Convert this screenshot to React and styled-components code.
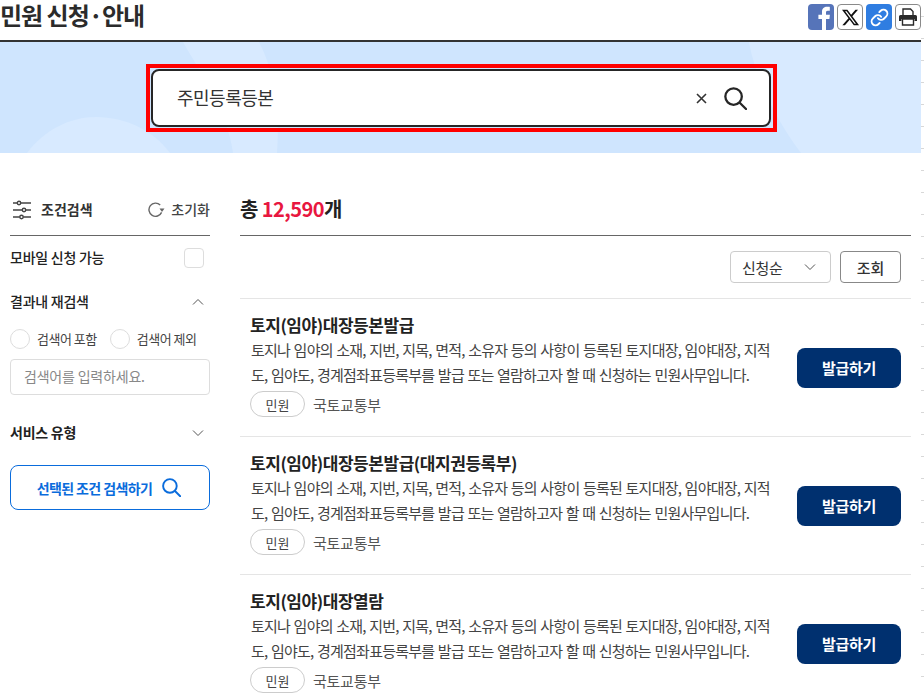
import React from "react";
import styled, { createGlobalStyle } from "styled-components";
import { FaXTwitter } from "react-icons/fa6";
import { Link as LinkIcon } from "lucide-react";

const Global = createGlobalStyle`
  html, body { margin: 0; padding: 0; background: #fff; overflow: hidden; }
  body { font-family: "Noto Sans CJK KR", "Noto Sans", sans-serif; color: #222; }
  * { box-sizing: border-box; }
`;

const Page = styled.div`
  display: flex;
  width: 924px;
  height: 698px;
  overflow: hidden;
`;
const Main = styled.div`
  width: 921px;
  flex: none;
`;
const TickStrip = styled.div`
  width: 3px;
  height: 682px;
  flex: none;
  background: repeating-linear-gradient(to bottom, transparent 0, transparent 16px, #d8d8d8 16px, #d8d8d8 17px, transparent 17px, transparent 22px);
`;
const Header = styled.header`
  height: 42px;
  display: flex;
  justify-content: space-between;
  border-bottom: 2px solid #333;
`;
const Title = styled.h1`
  margin: 0;
  font-size: 24px;
  font-weight: 700;
  line-height: 30px;
  color: #2b2b2b;
  letter-spacing: -1px;
`;
const ShareRow = styled.div`
  display: flex;
  gap: 3px;
  padding-top: 4px;
`;
const ShareButton = styled.button`
  width: 26px;
  height: 26px;
  padding: 0;
  display: flex;
  align-items: center;
  justify-content: center;
  overflow: hidden;
  border-radius: 4px;
  color: ${(p) => p.$color || "#222"};
  background: ${(p) => p.$bg || "#fff"};
  border: ${(p) => (p.$outlined ? "1px solid #8a8a8a" : "none")};
`;
const Banner = styled.section`
  position: relative;
  height: 111px;
  background: #cfe5fe;
  overflow: hidden;
`;
const BannerArt = styled.svg`
  position: absolute;
  left: 0;
  top: 0;
`;
const RedFrame = styled.div`
  position: absolute;
  left: 146px;
  top: 22px;
  width: 631px;
  height: 68px;
  border: 4px solid #ff0000;
  padding: 1px;
`;
const SearchBox = styled.div`
  height: 58px;
  width: 620px;
  border: 2px solid #262626;
  border-radius: 8px;
  background: #fff;
  display: flex;
  align-items: center;
  padding: 0 22px 0 24px;
`;
const SearchText = styled.span`
  flex: 1;
  padding-bottom: 2px;
  font-size: 18px;
  letter-spacing: -0.5px;
  color: #333;
`;
const ClearMark = styled.svg`
  margin-right: 17px;
`;
const Content = styled.div`
  display: flex;
  gap: 30px;
  padding: 44px 10px 0;
`;
const Sidebar = styled.aside`
  width: 200px;
  flex: none;
`;
const SideHead = styled.div`
  height: 39px;
  padding-bottom: 12px;
  padding-left: 3px;
  display: flex;
  align-items: center;
  border-bottom: 1px solid #666;
`;
const SideTitle = styled.strong`
  flex: 1;
  margin-left: 10px;
  padding-bottom: 2px;
  font-size: 14px;
  font-weight: 700;
  color: #333;
`;
const ResetLabel = styled.span`
  margin-left: 6px;
  padding-bottom: 2px;
  font-size: 14px;
  font-weight: 500;
  color: #444;
`;
const FilterRow = styled.div`
  height: 44px;
  display: flex;
  align-items: center;
  justify-content: space-between;
  padding-right: ${(p) => p.$pad || 6}px;
  margin-top: ${(p) => p.$top || 0}px;
`;
const FilterLabel = styled.span`
  padding-bottom: 2px;
  font-size: 14px;
  letter-spacing: -0.25px;
  font-weight: ${(p) => p.$weight || 500};
  color: #222;
`;
const CheckBox = styled.span`
  width: 20px;
  height: 20px;
  border: 1px solid #ddd;
  border-radius: 4px;
`;
const RadioRow = styled.div`
  display: flex;
  align-items: center;
  margin-top: 5px;
  height: 20px;
`;
const Radio = styled.span`
  width: 20px;
  height: 20px;
  border: 1px solid #ddd;
  border-radius: 50%;
  margin-left: ${(p) => p.$offset || 0}px;
`;
const RadioLabel = styled.span`
  margin-left: 7px;
  padding-bottom: 1px;
  font-size: 13px;
  letter-spacing: -0.5px;
  color: #444;
`;
const KeywordInput = styled.div`
  margin-top: 10px;
  height: 36px;
  padding-left: 13px;
  padding-bottom: 2px;
  display: flex;
  align-items: center;
  border: 1px solid #ddd;
  border-radius: 4px;
  font-size: 14px;
  letter-spacing: -0.2px;
  color: #888;
`;
const ApplyButton = styled.button`
  margin-top: 10px;
  width: 200px;
  height: 45px;
  display: flex;
  align-items: center;
  justify-content: center;
  gap: 10px;
  padding: 0 2px 0 0;
  background: #fff;
  border: 1px solid #0a6cdc;
  border-radius: 8px;
  font-family: inherit;
  font-size: 14px;
  letter-spacing: -0.6px;
  font-weight: 700;
  color: #0a6cdc;
`;
const Results = styled.div`
  flex: 1;
`;
const ResultHead = styled.div`
  height: 39px;
  padding-bottom: 15px;
  display: flex;
  align-items: center;
  border-bottom: 1px solid #666;
  font-size: 20px;
  letter-spacing: -0.55px;
  font-weight: 700;
  color: #222;
  white-space: pre;
`;
const Count = styled.span`
  color: #e8173f;
`;
const Toolbar = styled.div`
  height: 62px;
  padding: 15px 10px 0 0;
  display: flex;
  justify-content: flex-end;
  gap: 9px;
`;
const SortSelect = styled.div`
  width: 101px;
  height: 32px;
  padding: 0 14px 0 11px;
  display: flex;
  align-items: center;
  justify-content: space-between;
  border: 1px solid #ccc;
  border-radius: 4px;
  font-size: 15px;
  letter-spacing: -0.3px;
  color: #333;
`;
const QueryButton = styled.button`
  width: 61px;
  height: 32px;
  padding: 0;
  background: #fff;
  border: 1px solid #888;
  border-radius: 4px;
  font-family: inherit;
  font-size: 15px;
  font-weight: 500;
  color: #333;
`;
const Item = styled.article`
  height: 138px;
  padding: 0 10px;
  display: flex;
  align-items: center;
  justify-content: space-between;
  border-top: 1px solid #e5e5e5;
`;
const ItemBody = styled.div`
  width: 525px;
  padding-bottom: 5px;
`;
const ItemTitle = styled.h3`
  margin: 0;
  font-size: 17px;
  letter-spacing: -0.45px;
  line-height: 24px;
  font-weight: 700;
  color: #222;
`;
const ItemDesc = styled.p`
  margin: 0;
  padding-left: 1px;
  font-size: 15px;
  letter-spacing: -0.75px;
  word-spacing: 0.85px;
  line-height: 25px;
  color: #444;
`;
const MetaRow = styled.div`
  margin-top: 4px;
  display: flex;
  align-items: center;
  gap: 8px;
`;
const Tag = styled.span`
  width: 55px;
  height: 26px;
  display: flex;
  align-items: center;
  justify-content: center;
  border: 1px solid #ccc;
  border-radius: 13px;
  font-size: 13px;
  color: #444;
`;
const Agency = styled.span`
  font-size: 15px;
  letter-spacing: -0.25px;
  color: #555;
`;
const IssueButton = styled.button`
  width: 104px;
  height: 40px;
  flex: none;
  padding: 0;
  background: #00306f;
  border: none;
  border-radius: 8px;
  font-family: inherit;
  font-size: 15px;
  letter-spacing: -0.3px;
  font-weight: 700;
  color: #fff;
`;

const Magnifier = ({ size, color, width = 2 }) => (
  <svg width={size} height={size} viewBox="0 0 24 24" fill="none" stroke={color} strokeWidth={width} strokeLinecap="round">
    <circle cx="10" cy="10" r="8.6" />
    <path d="M16.4 16.4 23 23" />
  </svg>
);
const Chevron = ({ up }) => (
  <svg width="12" height="8" viewBox="0 0 12 8" fill="none" stroke="#555" strokeWidth="1">
    <path d={up ? "M1 6.5 6 1.5l5 5" : "M1 1.5l5 5 5-5"} />
  </svg>
);
const SlidersIcon = () => (
  <svg width="18" height="20" viewBox="0 0 18 20" fill="none" stroke="#444" strokeWidth="1.4">
    <path d="M0 3h4.300M7.700 3H18M0 10h9.300M12.700 10H18M0 17h6.800M10.200 17H18" />
    <circle cx="6" cy="3" r="1.700" />
    <circle cx="11" cy="10" r="1.700" />
    <circle cx="8.500" cy="17" r="1.700" />
  </svg>
);
const ResetIcon = () => (
  <svg width="17" height="16" viewBox="0 0 17 16" fill="none">
    <path d="M13.6 10.400A6.600 6.600 0 1 1 12.200 3" stroke="#666" strokeWidth="1.4" />
    <path d="M11.500 6.500h5L14 10z" fill="#666" />
  </svg>
);
const FacebookGlyph = () => (
  <svg width="26" height="26" viewBox="0 0 26 26">
    <path fill="#fff" d="M14 26V15h-3.600v-4.200H14V7.900C14 4.300 16.200 2.800 19 2.800c1.300 0 2.500.1 2.800.15v3.700h-2c-1.500 0-1.800.8-1.800 1.900v2.250h3.900l-.5 4.200H18V26z" />
  </svg>
);
const PrintGlyph = () => (
  <svg width="20" height="20" viewBox="0 0 20 20">
    <path fill="#fff" stroke="#2a2a2a" strokeWidth="1.4" d="M5 9V2h7.500L15 4.500V9" />
    <path fill="#2a2a2a" d="M2.500 8h15A1.500 1.500 0 0 1 19 9.500V14h-2.500v-2h-13v2H1V9.500A1.500 1.500 0 0 1 2.500 8z" />
    <path fill="#fff" stroke="#2a2a2a" strokeWidth="1.4" d="M4.500 12h11v6h-11z" />
  </svg>
);

const DESC1 = "토지나 임야의 소재, 지번, 지목, 면적, 소유자 등의 사항이 등록된 토지대장, 임야대장, 지적도, 임야도, 경계점좌표등록부를 발급 또는 열람하고자 할 때 신청하는 민원사무입니다.";
const items = ["토지(임야)대장등본발급", "토지(임야)대장등본발급(대지권등록부)", "토지(임야)대장열람"];

export default function App() {
  return (
    <Page>
      <Global />
      <Main>
        <Header>
          <Title>민원 신청·안내</Title>
          <ShareRow>
            <ShareButton $bg="#5674b9" aria-label="페이스북"><FacebookGlyph /></ShareButton>
            <ShareButton $outlined aria-label="X"><FaXTwitter size={19} color="#111" /></ShareButton>
            <ShareButton $bg="#2f7de1" $color="#fff" aria-label="링크"><LinkIcon size={19} strokeWidth={2.4} /></ShareButton>
            <ShareButton $outlined aria-label="인쇄"><PrintGlyph /></ShareButton>
          </ShareRow>
        </Header>
        <Banner>
          <BannerArt width="921" height="111" viewBox="0 0 921 111" fill="#d8eaff">
            <path d="M27 111C44 88 70 75 96 75c30 0 58 14 74 36z" />
            <path d="M183 0C200 30 228 70 233 111h44C280 70 275 30 259 0z" />
            <path d="M749 0c5 30 25 76 52 111h120V0z" />
          </BannerArt>
          <RedFrame>
            <SearchBox>
              <SearchText>주민등록등본</SearchText>
              <ClearMark width="11" height="11" viewBox="0 0 11 11" stroke="#333" strokeWidth="1.6" fill="none">
                <path d="M1 1l9 9M10 1l-9 9" />
              </ClearMark>
              <Magnifier size={23} color="#262626" width={2.4} />
            </SearchBox>
          </RedFrame>
        </Banner>
        <Content>
          <Sidebar>
            <SideHead>
              <SlidersIcon />
              <SideTitle>조건검색</SideTitle>
              <ResetIcon />
              <ResetLabel>초기화</ResetLabel>
            </SideHead>
            <FilterRow>
              <FilterLabel>모바일 신청 가능</FilterLabel>
              <CheckBox />
            </FilterRow>
            <FilterRow>
              <FilterLabel>결과내 재검색</FilterLabel>
              <Chevron up />
            </FilterRow>
            <RadioRow>
              <Radio />
              <RadioLabel>검색어 포함</RadioLabel>
              <Radio $offset={13} />
              <RadioLabel>검색어 제외</RadioLabel>
            </RadioRow>
            <KeywordInput>검색어를 입력하세요.</KeywordInput>
            <FilterRow $top={16}>
              <FilterLabel $weight={700}>서비스 유형</FilterLabel>
              <Chevron />
            </FilterRow>
            <ApplyButton>
              선택된 조건 검색하기
              <Magnifier size={19} color="#0a6cdc" width={2.4} />
            </ApplyButton>
          </Sidebar>
          <Results>
            <ResultHead>
              총 <Count>12,590</Count>개
            </ResultHead>
            <Toolbar>
              <SortSelect>
                신청순
                <Chevron />
              </SortSelect>
              <QueryButton>조회</QueryButton>
            </Toolbar>
            {items.map((title) => (
              <Item key={title}>
                <ItemBody>
                  <ItemTitle>{title}</ItemTitle>
                  <ItemDesc>{DESC1}</ItemDesc>
                  <MetaRow>
                    <Tag>민원</Tag>
                    <Agency>국토교통부</Agency>
                  </MetaRow>
                </ItemBody>
                <IssueButton>발급하기</IssueButton>
              </Item>
            ))}
          </Results>
        </Content>
      </Main>
      <TickStrip />
    </Page>
  );
}
